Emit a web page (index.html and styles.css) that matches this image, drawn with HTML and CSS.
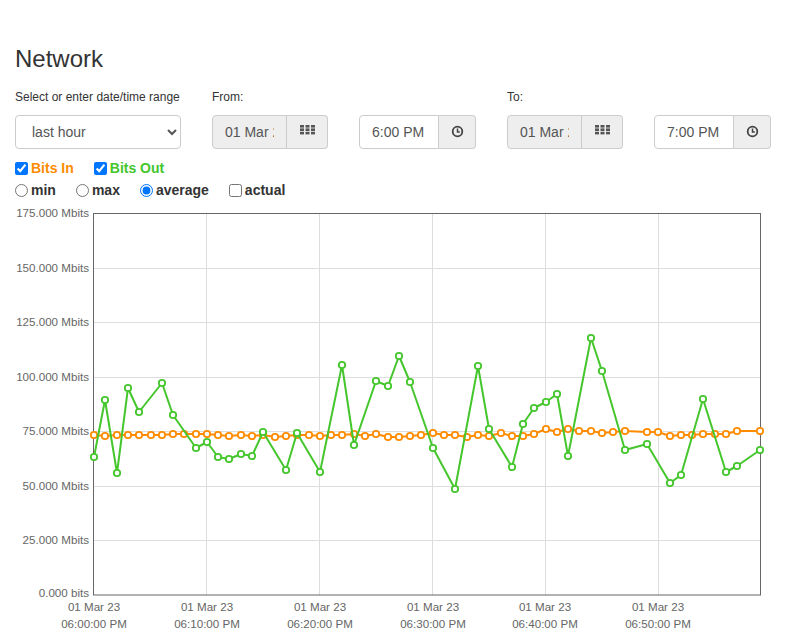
FILE: index.html
```html
<!DOCTYPE html>
<html>
<head>
<meta charset="utf-8">
<title>Network</title>
<link rel="stylesheet" href="styles.css">
</head>
<body>
<h1 class="title">Network</h1>

<div class="controls">
  <label class="field-label">Select or enter date/time range</label>
  <label class="field-label">From:</label>
  <span class="field-label"></span>
  <label class="field-label">To:</label>
  <span class="field-label"></span>

  <select class="form-control range-select">
    <option>last hour</option>
  </select>

  <div class="input-group">
    <input class="form-control date-input" value="01 Mar 2023" readonly>
    <span class="addon addon-date">
      <svg class="icon-grid" width="15" height="10" viewBox="0 0 15 10"><g fill="#555"><rect x="0" y="0" width="4" height="2.6"/><rect x="5.5" y="0" width="4" height="2.6"/><rect x="11" y="0" width="4" height="2.6"/><rect x="0" y="3.4" width="4" height="2.6"/><rect x="5.5" y="3.4" width="4" height="2.6"/><rect x="11" y="3.4" width="4" height="2.6"/><rect x="0" y="6.8" width="4" height="2.6"/><rect x="5.5" y="6.8" width="4" height="2.6"/><rect x="11" y="6.8" width="4" height="2.6"/></g></svg>
    </span>
  </div>

  <div class="input-group">
    <input class="form-control time-input" value="6:00 PM">
    <span class="addon addon-time">
      <svg class="icon-clock" width="13" height="13" viewBox="0 0 13 13"><circle cx="6.5" cy="6.5" r="4.8" fill="none" stroke="#444" stroke-width="1.8"/><path d="M6.5 3.6 V6.9 H8.8" fill="none" stroke="#444" stroke-width="1.5"/></svg>
    </span>
  </div>

  <div class="input-group">
    <input class="form-control date-input" value="01 Mar 2023" readonly>
    <span class="addon addon-date">
      <svg class="icon-grid" width="15" height="10" viewBox="0 0 15 10"><g fill="#555"><rect x="0" y="0" width="4" height="2.6"/><rect x="5.5" y="0" width="4" height="2.6"/><rect x="11" y="0" width="4" height="2.6"/><rect x="0" y="3.4" width="4" height="2.6"/><rect x="5.5" y="3.4" width="4" height="2.6"/><rect x="11" y="3.4" width="4" height="2.6"/><rect x="0" y="6.8" width="4" height="2.6"/><rect x="5.5" y="6.8" width="4" height="2.6"/><rect x="11" y="6.8" width="4" height="2.6"/></g></svg>
    </span>
  </div>

  <div class="input-group">
    <input class="form-control time-input" value="7:00 PM">
    <span class="addon addon-time">
      <svg class="icon-clock" width="13" height="13" viewBox="0 0 13 13"><circle cx="6.5" cy="6.5" r="4.8" fill="none" stroke="#444" stroke-width="1.8"/><path d="M6.5 3.6 V6.9 H8.8" fill="none" stroke="#444" stroke-width="1.5"/></svg>
    </span>
  </div>
</div>

<div class="options">
  <div class="opt-row">
    <label class="opt bits-in"><input type="checkbox" checked>Bits In</label>
    <label class="opt bits-out"><input type="checkbox" checked>Bits Out</label>
  </div>
  <div class="opt-row">
    <label class="opt"><input type="radio" name="agg">min</label>
    <label class="opt"><input type="radio" name="agg">max</label>
    <label class="opt"><input type="radio" name="agg" checked>average</label>
    <label class="opt"><input type="checkbox">actual</label>
  </div>
</div>

<svg class="chart" id="chart" width="772" height="433" viewBox="15 201 772 433">
  <g class="grid">
    <line x1="93" y1="268.5" x2="760" y2="268.5"/>
    <line x1="93" y1="322.5" x2="760" y2="322.5"/>
    <line x1="93" y1="377.5" x2="760" y2="377.5"/>
    <line x1="93" y1="431.5" x2="760" y2="431.5"/>
    <line x1="93" y1="486.5" x2="760" y2="486.5"/>
    <line x1="93" y1="540.5" x2="760" y2="540.5"/>
    <line x1="206.5" y1="213" x2="206.5" y2="595"/>
    <line x1="319.5" y1="213" x2="319.5" y2="595"/>
    <line x1="432.5" y1="213" x2="432.5" y2="595"/>
    <line x1="545.5" y1="213" x2="545.5" y2="595"/>
    <line x1="658.5" y1="213" x2="658.5" y2="595"/>
  </g>
  <rect class="frame" x="93.5" y="213.5" width="667" height="381.5"/>
  <g class="ylabels">
    <text x="89" y="217">175.000 Mbits</text>
    <text x="89" y="272">150.000 Mbits</text>
    <text x="89" y="326">125.000 Mbits</text>
    <text x="89" y="381">100.000 Mbits</text>
    <text x="89" y="435">75.000 Mbits</text>
    <text x="89" y="490">50.000 Mbits</text>
    <text x="89" y="544">25.000 Mbits</text>
    <text x="89" y="597">0.000 bits</text>
  </g>
  <g class="xlabels">
    <text x="94" y="611">01 Mar 23</text><text x="94" y="628">06:00:00 PM</text>
    <text x="207" y="611">01 Mar 23</text><text x="207" y="628">06:10:00 PM</text>
    <text x="320" y="611">01 Mar 23</text><text x="320" y="628">06:20:00 PM</text>
    <text x="433" y="611">01 Mar 23</text><text x="433" y="628">06:30:00 PM</text>
    <text x="545" y="611">01 Mar 23</text><text x="545" y="628">06:40:00 PM</text>
    <text x="658" y="611">01 Mar 23</text><text x="658" y="628">06:50:00 PM</text>
  </g>
  <g id="series"></g>
</svg>

<script src="chart.js"></script>
</body>
</html>
```

FILE: styles.css
```css
html, body {
  margin: 0;
  padding: 0;
}

body {
  padding: 46px 15px 0;
  font-family: "Liberation Sans", Arial, sans-serif;
  color: #333;
  background: #fff;
  overflow: hidden;
}

.title {
  margin: 0 0 17px;
  font-size: 24px;
  line-height: 26px;
  font-weight: normal;
  color: #333;
}

.controls {
  display: grid;
  grid-template-columns: 166px 116px 117px 116px 117px;
  column-gap: 31px;
  row-gap: 9px;
}

.field-label {
  display: block;
  font-size: 12px;
  line-height: 17px;
  height: 17px;
  color: #333;
}

.form-control {
  box-sizing: border-box;
  height: 34px;
  padding: 6px 12px;
  font-family: "Liberation Sans", Arial, sans-serif;
  font-size: 14px;
  color: #555;
  background: #fff;
  border: 1px solid #ccc;
  border-radius: 4px;
  margin: 0;
  outline: none;
}

.range-select {
  width: 166px;
}

.input-group {
  display: flex;
  height: 34px;
}

.input-group .form-control {
  border-radius: 4px 0 0 4px;
  min-width: 0;
}

.date-input {
  width: 75px;
  background: #eee;
}

.time-input {
  width: 80px;
}

.addon {
  box-sizing: border-box;
  display: flex;
  align-items: center;
  justify-content: center;
  height: 34px;
  background: #eee;
  border: 1px solid #ccc;
  border-left: 0;
  border-radius: 0 4px 4px 0;
}

.addon-date {
  width: 41px;
}

.addon-time {
  width: 37px;
}

.icon-grid {
  display: block;
  margin-bottom: 5px;
}

.icon-clock {
  display: block;
  margin-bottom: 2px;
}

.options {
  margin-top: 8px;
}

.opt-row {
  display: flex;
  align-items: center;
  height: 22px;
}

.opt {
  display: flex;
  align-items: center;
  margin-right: 20px;
  font-size: 14px;
  font-weight: bold;
  color: #333;
}

.opt input {
  margin: 0 3px 0 0;
  width: 13px;
  height: 13px;
}

.bits-in {
  color: #ff8c00;
}

.bits-out {
  color: #44c62c;
}

.chart {
  display: block;
}

.grid line {
  stroke: #dddddd;
  stroke-width: 1;
}

.frame {
  fill: none;
  stroke: #666;
  stroke-width: 1;
}

.ylabels text,
.xlabels text {
  font-family: "Liberation Sans", Arial, sans-serif;
  font-size: 11.6px;
  fill: #666;
}

.ylabels text {
  text-anchor: end;
}

.xlabels text {
  text-anchor: middle;
}

.line {
  fill: none;
  stroke-width: 2;
  stroke-linejoin: round;
}

.marker {
  fill: #fff;
  stroke-width: 1.8;
}

.s-in .line, .s-in .marker {
  stroke: #ff8c00;
}

.s-out .line, .s-out .marker {
  stroke: #44c62c;
}
```

FILE: chart.js
```js
(function () {
  var ns = "http://www.w3.org/2000/svg";
  var bitsIn = [
    [94,435],[105,436],[117,435],[128,435],[139,435],[151,435],[162,435],[173,434],[184,434],[196,434],
    [207,434],[218,435],[229,436],[241,435],[252,436],[263,435],[275,437],[286,436],[297,435],[309,435],
    [320,436],[331,435],[342,435],[354,434],[365,436],[376,434],[388,437],[399,437],[410,436],[421,435],
    [433,433],[444,435],[455,435],[467,437],[478,435],[489,436],[501,433],[512,436],[523,436],[534,434],
    [546,429],[557,432],[568,429],[579,431],[591,431],[602,433],[613,432],[625,431],[647,432],[658,432],
    [670,436],[681,435],[692,435],[703,434],[715,434],[726,434],[737,431],[760,431]
  ];
  var bitsOut = [
    [94,457],[105,400],[117,473],[128,388],[139,412],[162,383],[173,415],[196,448],[207,442],[218,457],
    [229,459],[241,454],[252,456],[263,432],[286,470],[297,433],[320,472],[342,365],[354,445],[376,381],
    [388,386],[399,356],[410,382],[433,448],[455,489],[478,366],[489,429],[512,467],[523,424],[534,408],
    [546,402],[557,394],[568,456],[591,338],[602,371],[625,450],[647,444],[670,483],[681,475],[703,399],
    [726,472],[737,466],[760,450]
  ];
  var root = document.getElementById("series");
  function draw(pts, cls) {
    var g = document.createElementNS(ns, "g");
    g.setAttribute("class", cls);
    var pl = document.createElementNS(ns, "polyline");
    pl.setAttribute("class", "line");
    pl.setAttribute("points", pts.map(function (p) { return p[0] + "," + p[1]; }).join(" "));
    g.appendChild(pl);
    pts.forEach(function (p) {
      var c = document.createElementNS(ns, "circle");
      c.setAttribute("class", "marker");
      c.setAttribute("cx", p[0]);
      c.setAttribute("cy", p[1]);
      c.setAttribute("r", 3.2);
      g.appendChild(c);
    });
    root.appendChild(g);
  }
  draw(bitsIn, "s-in");
  draw(bitsOut, "s-out");
})();
```
